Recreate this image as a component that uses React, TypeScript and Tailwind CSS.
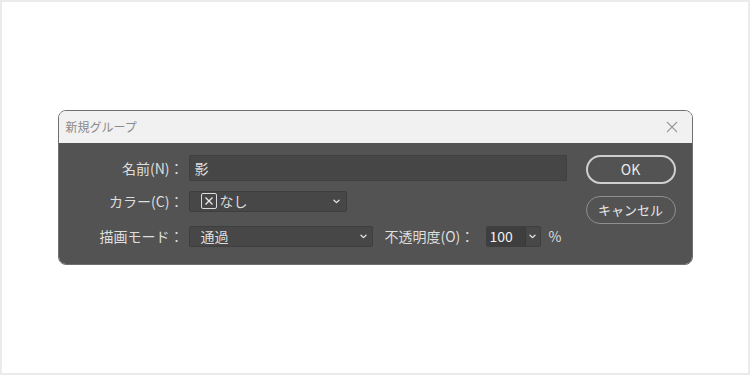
import React from 'react'

const font = { fontFamily: '"Noto Sans CJK JP", "Noto Sans", sans-serif' }

function Chevron() {
  return (
    <svg width="7" height="5" viewBox="0 0 7 5" className="shrink-0">
      <path d="M1 1.2 L3.5 3.6 L6 1.2" fill="none" stroke="#e6e6e6" strokeWidth="1.3" strokeLinecap="round" strokeLinejoin="round" />
    </svg>
  )
}

export default function App() {
  return (
    <div
      className="w-[750px] h-[375px] bg-white border-2 border-[#ebebeb] flex items-center justify-center"
      style={font}
    >
      <div className="w-[635px] h-[155px] rounded-[8px] border border-[#707070] overflow-hidden flex flex-col">
        {/* title bar */}
        <div className="h-[32px] bg-[#f1f1f1] flex items-center justify-between pl-[7px] pr-[14px]">
          <span className="text-[12px] text-[#8a8a8a]">新規グループ</span>
          <svg width="12" height="12" viewBox="0 0 12 12">
            <path d="M1 1 L11 11 M11 1 L1 11" stroke="#9a9a9a" strokeWidth="1.1" />
          </svg>
        </div>

        {/* body */}
        <div className="flex-1 bg-[#535353] flex">
          <div className="flex flex-col pt-[12px] text-[14px] text-[#dedede]">
            <div className="flex items-center h-[26px]">
              <span className="w-[125px] text-right">名前(N)：</span>
              <div className="ml-[5px] w-[378px] h-[26px] bg-[#464646] border border-[#414141] flex items-center pl-[5px]">
                影
              </div>
            </div>

            <div className="flex items-center h-[20px] mt-[10px]">
              <span className="w-[125px] text-right">カラー(C)：</span>
              <div className="ml-[5px] w-[158px] h-[21px] bg-[#474747] border border-[#3e3e3e] rounded-[2px] flex items-center pl-[11px] pr-[6px]">
                <span className="w-[16px] h-[16px] border-[1.5px] border-[#dcdcdc] rounded-[2px] flex items-center justify-center">
                  <svg width="10" height="10" viewBox="0 0 10 10">
                    <path d="M1.5 1.5 L8.5 8.5 M8.5 1.5 L1.5 8.5" stroke="#e6e6e6" strokeWidth="1.4" />
                  </svg>
                </span>
                <span className="ml-[3px]">なし</span>
                <span className="ml-auto">
                  <Chevron />
                </span>
              </div>
            </div>

            <div className="flex items-center h-[21px] mt-[15px]">
              <span className="w-[125px] text-right">描画モード：</span>
              <div className="ml-[5px] w-[184px] h-[21px] bg-[#474747] border border-[#3e3e3e] rounded-[2px] flex items-center pl-[11px] pr-[5px]">
                <span>通過</span>
                <span className="ml-auto">
                  <Chevron />
                </span>
              </div>
              <span className="ml-[12px] w-[101px]">不透明度(O)：</span>
              <div className="w-[55px] h-[21px] flex border border-[#3e3e3e] rounded-[2px]">
                <div className="w-[38px] bg-[#3e3e3e] flex items-center pl-[3px] text-[#f0f0f0]">100</div>
                <div className="flex-1 bg-[#484848] border-l border-[#393939] flex items-center justify-center">
                  <Chevron />
                </div>
              </div>
              <span className="ml-[8px]">%</span>
            </div>
          </div>

          <div className="ml-auto mr-[16px] pt-[12px] flex flex-col text-[13px] text-[#e8e8e8]">
            <button className="w-[90px] h-[29px] rounded-full border-2 border-[#cfcfcf] flex items-center justify-center text-[14px]">
              OK
            </button>
            <button className="mt-[12px] w-[90px] h-[28px] rounded-full border border-[#8f8f8f] flex items-center justify-center">
              キャンセル
            </button>
          </div>
        </div>
      </div>
    </div>
  )
}
